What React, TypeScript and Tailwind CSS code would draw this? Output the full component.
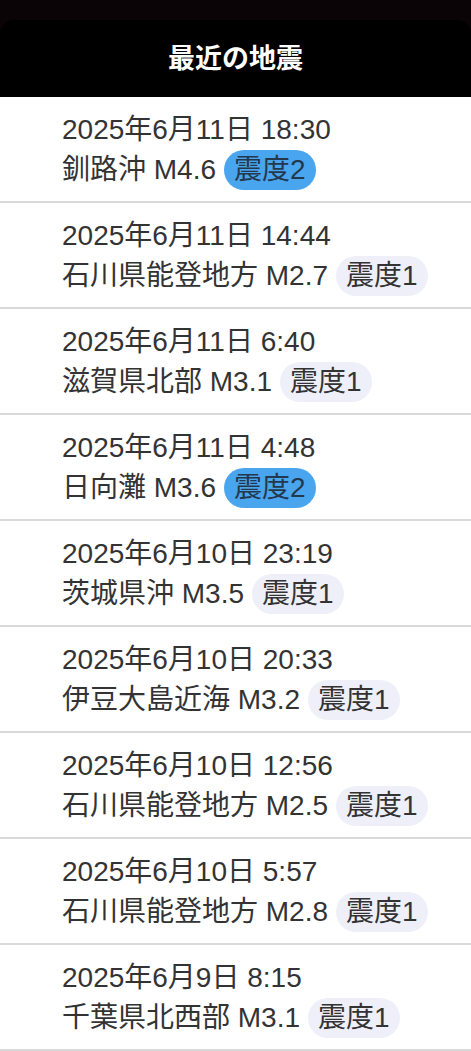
const quakes = [
  { time: "2025年6月11日 18:30", place: "釧路沖", mag: "M4.6", shindo: 2 },
  { time: "2025年6月11日 14:44", place: "石川県能登地方", mag: "M2.7", shindo: 1 },
  { time: "2025年6月11日 6:40", place: "滋賀県北部", mag: "M3.1", shindo: 1 },
  { time: "2025年6月11日 4:48", place: "日向灘", mag: "M3.6", shindo: 2 },
  { time: "2025年6月10日 23:19", place: "茨城県沖", mag: "M3.5", shindo: 1 },
  { time: "2025年6月10日 20:33", place: "伊豆大島近海", mag: "M3.2", shindo: 1 },
  { time: "2025年6月10日 12:56", place: "石川県能登地方", mag: "M2.5", shindo: 1 },
  { time: "2025年6月10日 5:57", place: "石川県能登地方", mag: "M2.8", shindo: 1 },
  { time: "2025年6月9日 8:15", place: "千葉県北西部", mag: "M3.1", shindo: 1 },
];

export default function App() {
  return (
    <div
      className="w-[471px] h-[1051px] overflow-hidden bg-[#0b0407]"
      style={{ fontFamily: '"Liberation Sans", "Noto Sans CJK JP", sans-serif' }}
    >
      <div className="h-[20px]" />
      <div className="rounded-t-[14px] bg-black h-[77px] flex items-center justify-center">
        <h1 className="text-white font-bold text-[27px] pt-[2px]">最近の地震</h1>
      </div>
      <ul className="bg-white">
        {quakes.map((q, i) => (
          <li
            key={i}
            className="pl-[62px] pt-[15px] pb-[11px] border-b-2 border-[#d9d9d9] text-[#333333] text-[28px]"
          >
            <div className="leading-[36px] h-[36px]">{q.time}</div>
            <div className="mt-[2px] h-[40px] flex items-center gap-[8px]">
              <span className="leading-[36px]">
                {q.place} {q.mag}
              </span>
              <span
                className={`h-[40px] px-[10px] rounded-full flex items-center leading-none ${
                  q.shindo === 2 ? "bg-[#4aa5ef] text-[#24384d]" : "bg-[#efeff9] text-[#333333]"
                }`}
              >
                震度{q.shindo}
              </span>
            </div>
          </li>
        ))}
      </ul>
    </div>
  );
}
